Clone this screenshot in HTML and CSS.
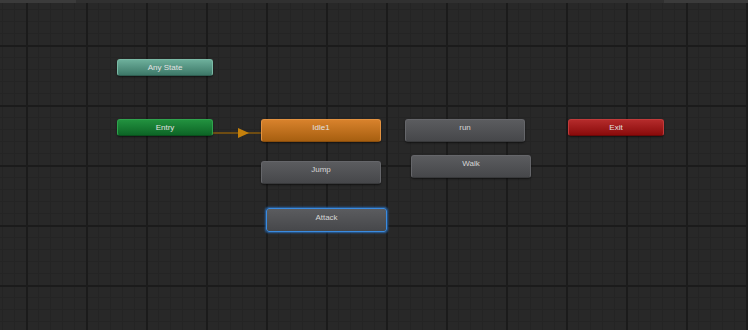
FILE: index.html
```html
<!DOCTYPE html>
<html>
<head>
<meta charset="utf-8">
<link rel="stylesheet" href="styles.css">
</head>
<body>
<div class="animator">
  <div class="topbar">
    <div class="tab-left"></div>
    <div class="tab-mid"></div>
    <div class="tab-right"></div>
  </div>
  <div class="graph">
    <div class="transition">
      <div class="line"></div>
      <svg class="head" width="11" height="10" viewBox="0 0 11 10"><polygon points="0,0 11,5 0,10" fill="#c4800c"/></svg>
    </div>
    <div class="node small any">Any State</div>
    <div class="node small entry">Entry</div>
    <div class="node small exit">Exit</div>
    <div class="node big idle">Idle1</div>
    <div class="node big gray run">run</div>
    <div class="node big gray walk">Walk</div>
    <div class="node big gray jump">Jump</div>
    <div class="node big gray attack">Attack</div>
  </div>
</div>
</body>
</html>
```
FILE: styles.css
```css
html, body {
  margin: 0;
  padding: 0;
  background: #282828;
}
.animator {
  width: 748px;
  height: 330px;
  position: relative;
  overflow: hidden;
  font-family: "Liberation Sans", Arial, sans-serif;
}
.topbar {
  display: flex;
  height: 3px;
}
.tab-left { width: 76px; background: #3b3b3b; }
.tab-mid { flex: 1; background: #303030; }
.tab-right { width: 84px; background: #3b3b3b; }
.graph {
  position: absolute;
  left: 0;
  top: 3px;
  width: 748px;
  height: 327px;
  background-color: #282828;
  background-image:
    linear-gradient(to right, #1b1b1b 0, #1b1b1b 2px, transparent 2px),
    linear-gradient(to bottom, #1b1b1b 0, #1b1b1b 2px, transparent 2px),
    linear-gradient(to right, #242424 0, #242424 1px, transparent 1px),
    linear-gradient(to bottom, #242424 0, #242424 1px, transparent 1px);
  background-size: 60px 60px, 60px 60px, 12px 12px, 12px 12px;
  background-position: 26px 42px, 26px 42px, 26px 42px, 26px 42px;
}
.node {
  position: absolute;
  box-sizing: border-box;
  border-radius: 3px;
  text-align: center;
  font-size: 8px;
  line-height: 16px;
  color: #e2e2e2;
  box-shadow: 0 1px 2px rgba(0,0,0,0.55);
}
.small { width: 96px; height: 17px; }
.big { width: 120px; height: 23px; }
.any {
  left: 117px; top: 56px;
  background: linear-gradient(#6cae9a, #3d7868);
  border: 1px solid #7bbaa6;
  border-bottom-color: #2f5e51;
}
.entry {
  left: 117px; top: 116px;
  background: linear-gradient(#22913f, #0d6526);
  border: 1px solid #2ea34c;
  border-bottom-color: #0a4f1d;
}
.exit {
  left: 568px; top: 116px;
  background: linear-gradient(#b42b2b, #8a0b0b);
  border: 1px solid #c23a3a;
  border-bottom-color: #6a0808;
}
.idle {
  left: 261px; top: 116px;
  background: linear-gradient(#d8822c, #a75f10);
  border: 1px solid #e39240;
  border-bottom-color: #8a4d0c;
}
.gray {
  background: linear-gradient(#5b5c5f, #46474a);
  border: 1px solid #65666a;
  border-bottom-color: #38393b;
  color: #d6d6d6;
}
.run { left: 405px; top: 116px; }
.walk { left: 411px; top: 152px; }
.jump { left: 261px; top: 158px; }
.attack {
  left: 266px; top: 205px;
  width: 121px; height: 24px;
  border: 1px solid #3a8be0;
  box-shadow: 0 0 2px 1px rgba(40,120,210,0.75);
  line-height: 17px;
}
.transition {
  position: absolute;
  left: 212px;
  top: 125px;
  width: 50px;
  height: 10px;
}
.transition .line {
  position: absolute;
  left: 0;
  top: 4px;
  width: 50px;
  height: 2px;
  background: #6e4c12;
}
.transition .head {
  position: absolute;
  left: 26px;
  top: 0;
  display: block;
}
```
